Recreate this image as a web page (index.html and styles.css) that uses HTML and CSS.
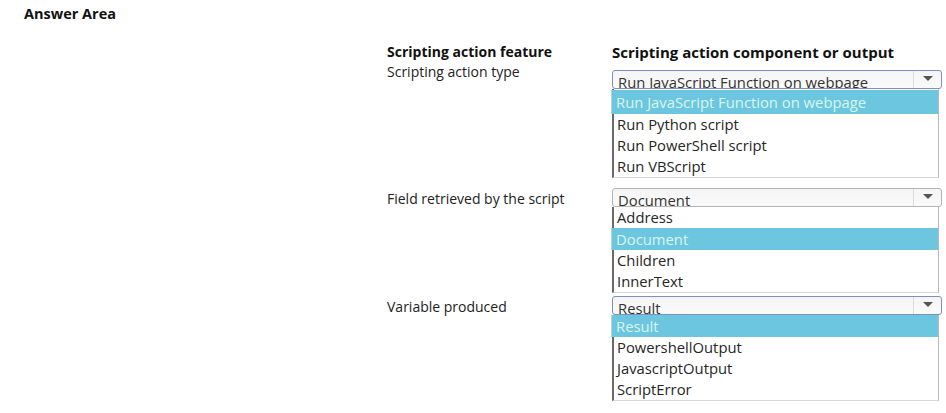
FILE: index.html
```html
<!DOCTYPE html>
<html lang="en">
<head>
<meta charset="utf-8">
<title>Answer Area</title>
<link rel="stylesheet" href="styles.css">
</head>
<body>
<h1 class="title">Answer Area</h1>
<div class="table">
  <div class="head">Scripting action feature</div>
  <div class="head wide">Scripting action component or output</div>

  <div class="label first">Scripting action type</div>
  <div class="widget gap-lg">
    <div class="select focus"><span class="value">Run JavaScript Function on webpage</span><span class="arrow"></span></div>
    <ul class="list">
      <li class="sel tall">Run JavaScript Function on webpage</li>
      <li>Run Python script</li>
      <li>Run PowerShell script</li>
      <li>Run VBScript</li>
    </ul>
  </div>

  <div class="label">Field retrieved by the script</div>
  <div class="widget gap-sm">
    <div class="select"><span class="value">Document</span><span class="arrow"></span></div>
    <ul class="list">
      <li>Address</li>
      <li class="sel">Document</li>
      <li>Children</li>
      <li>InnerText</li>
    </ul>
  </div>

  <div class="label">Variable produced</div>
  <div class="widget">
    <div class="select focus"><span class="value">Result</span><span class="arrow"></span></div>
    <ul class="list">
      <li class="sel">Result</li>
      <li>PowershellOutput</li>
      <li>JavascriptOutput</li>
      <li>ScriptError</li>
    </ul>
  </div>
</div>
</body>
</html>
```
FILE: styles.css
```css
html, body {
  margin: 0;
  padding: 0;
  background: #ffffff;
}
body {
  font-family: "Open Sans", "Noto Sans", sans-serif;
  color: #222;
  width: 946px;
  height: 413px;
  overflow: hidden;
}
.title {
  margin: 0;
  padding: 5px 0 0 24px;
  height: 32px;
  box-sizing: border-box;
  font-family: "Open Sans", "Noto Sans", sans-serif;
  font-weight: 700;
  font-size: 14.5px;
  line-height: 18px;
  color: #111;
}
.table {
  margin-left: 387px;
  width: 555px;
  display: grid;
  grid-template-columns: 225px 330px;
  row-gap: 0;
  padding-top: 10px;
}
.head {
  font-weight: 700;
  font-size: 14px;
  line-height: 20px;
  color: #111;
  margin-bottom: 8px;
}
.head.wide {
  font-size: 15px;
}
.label {
  font-size: 14px;
  line-height: 18px;
  color: #222;
  padding-top: 2px;
}
.label.first {
  padding-top: 0;
  margin-top: -7px;
}
.widget {
  display: flex;
  flex-direction: column;
}
.widget.gap-lg {
  margin-bottom: 10px;
}
.widget.gap-sm {
  margin-bottom: 3px;
}
.select {
  height: 19px;
  box-sizing: border-box;
  border: 1px solid #b4b4b4;
  border-radius: 3px;
  background: linear-gradient(#f5f5f5, #fafafa);
  display: flex;
  overflow: hidden;
}
.select.focus {
  border-color: #7d8fc0;
}
.value {
  flex: 1;
  padding-left: 5px;
  font-size: 14.8px;
  line-height: 23px;
  color: #333;
  white-space: nowrap;
  overflow: hidden;
}
.arrow {
  width: 27px;
  border-left: 1px solid #dcdcdc;
  position: relative;
}
.arrow::after {
  content: "";
  position: absolute;
  left: 9px;
  top: 5px;
  border-left: 5px solid transparent;
  border-right: 5px solid transparent;
  border-top: 5px solid #555;
}
.list {
  list-style: none;
  margin: 0 3px 0 0;
  padding: 0;
  border-left: 2px solid #6a6a6a;
  border-right: 1px solid #b9b9b9;
  border-bottom: 1px solid #d6d6d6;
}
.list li {
  height: 21px;
  padding-left: 3px;
  font-size: 14.8px;
  line-height: 21px;
  color: #262626;
  white-space: nowrap;
}
.list li.sel {
  height: 22px;
  line-height: 22px;
  margin-left: -3px;
  padding-left: 4px;
  background: #6cc6df;
  color: #d8f6ef;
  border-left: 1px solid #b9d9b4;
}
.list li.sel.tall {
  margin-top: 1px;
  height: 24px;
  line-height: 25px;
}
```
